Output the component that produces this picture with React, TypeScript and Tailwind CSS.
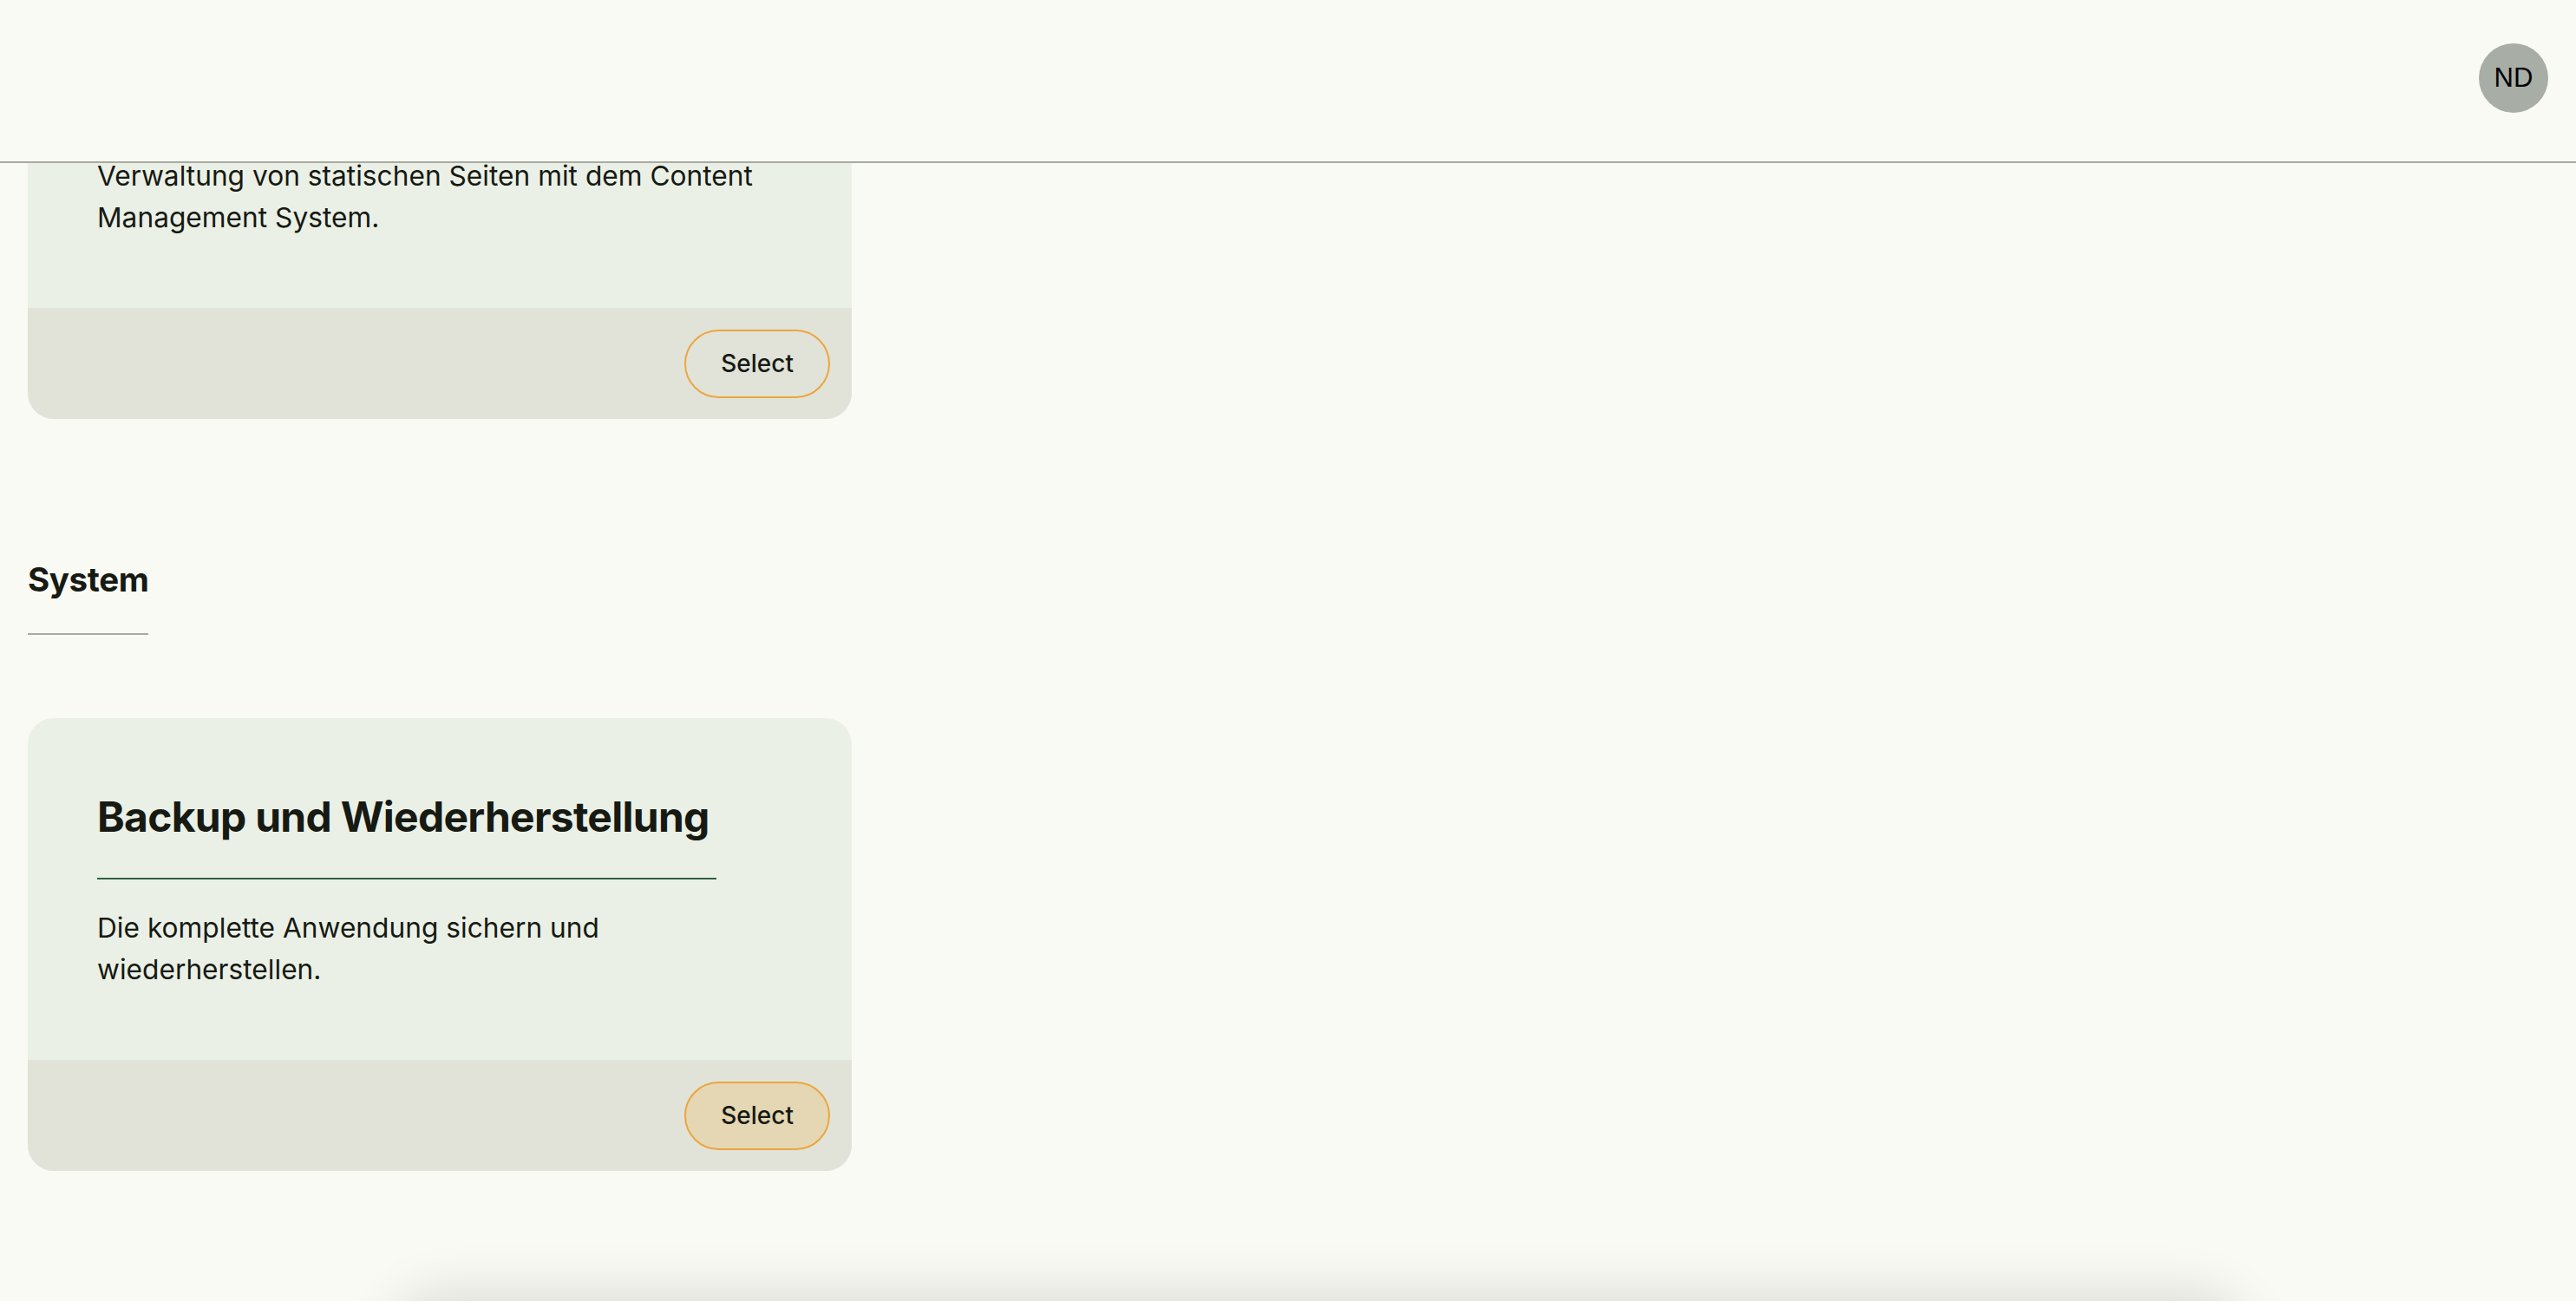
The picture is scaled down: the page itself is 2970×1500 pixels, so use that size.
import React from "react";

type Item = { title: string; text: string; active?: boolean };

const sections: { name: string; items: Item[] }[] = [
  {
    name: "Inhalte",
    items: [
      {
        title: "Seiten",
        text: "Verwaltung von statischen Seiten mit dem Content Management System.",
      },
    ],
  },
  {
    name: "System",
    items: [
      {
        title: "Backup und Wiederherstellung",
        text: "Die komplette Anwendung sichern und wiederherstellen.",
        active: true,
      },
    ],
  },
];

function Card({ item, anchor }: { item: Item; anchor?: boolean }) {
  return (
    <div className="w-[950px] rounded-[30px] overflow-hidden bg-[#ebf0e6]">
      <div className="pt-[86px] px-20 pb-20">
        <h3 className="text-[48px] leading-[56px] font-bold tracking-[-0.015em] text-[#161a13]">
          {item.title}
        </h3>
        <div className="mt-[42px] h-[2px] w-[714px] bg-[#2c6141]" />
        <p className="mt-8 text-[31.7px] leading-[48px] text-[#161a13]">{item.text}</p>
      </div>
      <div
        data-anchor={anchor ? "1" : undefined}
        className="h-[128px] bg-[#e1e3d9] flex items-center justify-end pr-[25px]"
      >
        <button
          className={
            "h-[79px] px-[40px] rounded-full border-2 border-[#eba63f] text-[28px] font-medium text-[#161a13] " +
            (item.active ? "bg-[#e5d7b3]" : "bg-transparent")
          }
        >
          Select
        </button>
      </div>
    </div>
  );
}

export default function App() {
  const mainRef = (el: HTMLDivElement | null) => {
    if (!el) return;
    const a = el.querySelector('[data-anchor="1"]') as HTMLElement | null;
    if (!a) return;
    const rel = a.getBoundingClientRect().top - el.getBoundingClientRect().top + el.scrollTop;
    el.scrollTop = rel - (355 - 188);
  };

  return (
    <div
      className="h-screen w-full flex flex-col bg-[#f9faf4] overflow-hidden relative"
      style={{ fontFamily: "Inter, 'Noto Sans', sans-serif" }}
    >
      <header className="h-[188px] shrink-0 border-b-2 border-[#a7aba1] flex justify-end items-start pt-[50px] pr-8 bg-[#f9faf4]">
        <div
          className="w-[80px] h-[80px] rounded-full bg-[#a8ada5] flex items-center justify-center text-[31px] text-black"
          style={{ fontFamily: "'Liberation Sans', Arial, sans-serif" }}
        >
          ND
        </div>
      </header>
      <main ref={mainRef} className="flex-1 overflow-y-auto [scrollbar-width:none] px-8 pb-[600px]">
        {sections.map((s, si) => (
          <section key={s.name} className={si === 0 ? "pt-[100px]" : "pt-[164px]"}>
            <h2 className="inline-block text-[38.5px] leading-[43px] font-bold tracking-[-0.01em] text-[#161a13] pb-10 border-b-2 border-[#a7aba1]">
              {s.name}
            </h2>
            <div className="mt-[96px] flex flex-wrap gap-8">
              {s.items.map((it, i) => (
                <Card key={i} item={it} anchor={si === 0 && i === 0} />
              ))}
            </div>
          </section>
        ))}
      </main>
      <div className="fixed left-[470px] w-[2100px] top-[1510px] h-[120px] rounded-[40px] bg-[#e9ebe4] shadow-[0_0_60px_20px_rgba(0,0,0,0.12)]" />
    </div>
  );
}
